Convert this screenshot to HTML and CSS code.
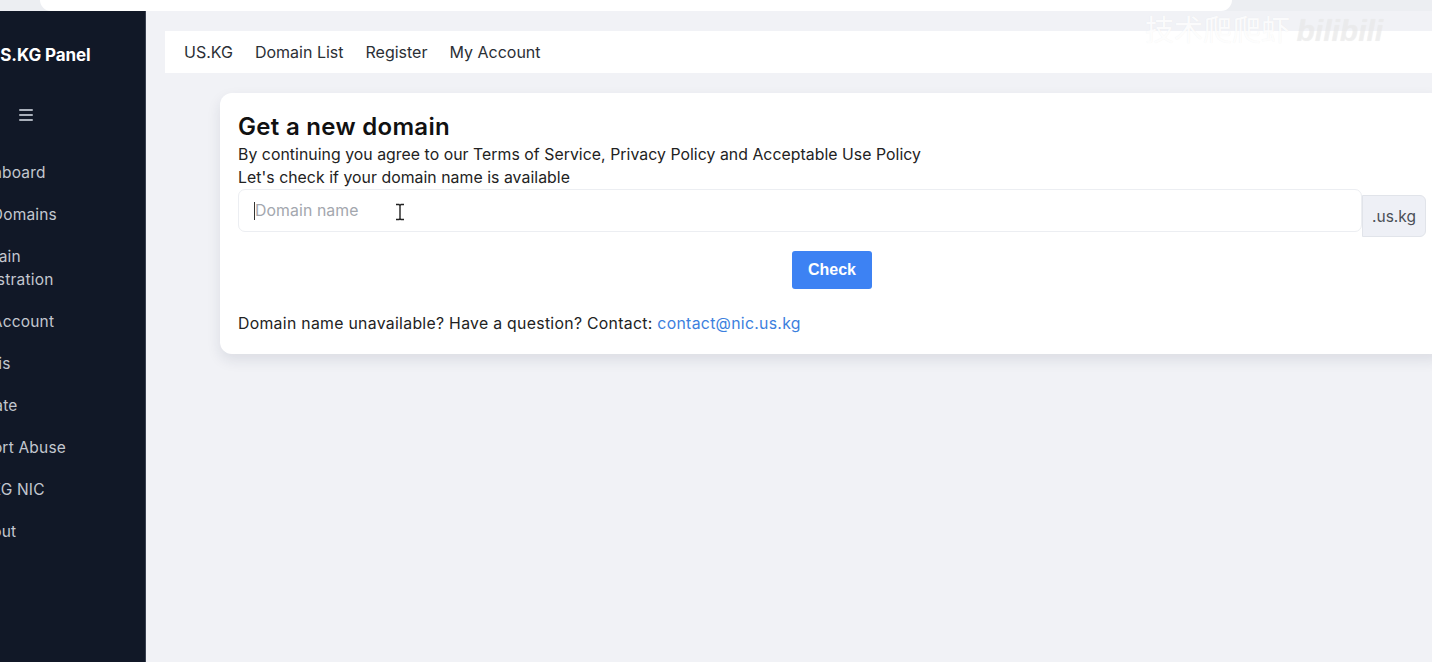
FILE: index.html
```html
<!DOCTYPE html>
<html lang="en">
<head>
<meta charset="utf-8">
<title>US.KG Panel</title>
<link rel="stylesheet" href="styles.css">
</head>
<body>
<div class="chrome"><div class="urlbar"></div></div>
<div class="app">
  <aside class="sidebar">
    <div class="brand">US.KG Panel</div>
    <div class="burger"><span></span><span></span><span></span></div>
    <nav class="menu">
      <a class="item">Dashboard</a>
      <a class="item">My Domains</a>
      <a class="item">Domain<br>Registration</a>
      <a class="item">My Account</a>
      <a class="item">Whois</a>
      <a class="item">Donate</a>
      <a class="item">Report Abuse</a>
      <a class="item">US.KG NIC</a>
      <a class="item">Logout</a>
    </nav>
  </aside>
  <main class="main">
    <div class="topnav">
      <a>US.KG</a><a>Domain List</a><a>Register</a><a>My Account</a>
    </div>
    <section class="card">
      <h1 class="title">Get a new domain</h1>
      <p class="line">By continuing you agree to our Terms of Service, Privacy Policy and Acceptable Use Policy</p>
      <p class="line">Let's check if your domain name is available</p>
      <div class="group">
        <div class="field">
          <span class="caret"></span><span class="ph">Domain name</span>
          <svg class="ibeam" width="12" height="18" viewBox="0 0 12 18"><path d="M2 1.5h3l1 1 1-1h3M6 2.5v13M2 16.5h3l1-1 1 1h3" fill="none" stroke="#222" stroke-width="1.4"/></svg>
        </div>
        <div class="suffix">.us.kg</div>
      </div>
      <div class="actions"><button class="btn">Check</button></div>
      <p class="line foot">Domain name unavailable? Have a question? Contact: <a class="link">contact@nic.us.kg</a></p>
    </section>
  </main>
</div>
<div class="watermark">技术爬爬虾 <span class="bili">bilibili</span></div>
</body>
</html>
```
FILE: styles.css
```css
* { box-sizing: border-box; }
html, body { margin: 0; padding: 0; }
body {
  width: 1432px;
  height: 662px;
  overflow: hidden;
  font-family: "Inter", "Open Sans", sans-serif;
  background: #f1f2f6;
  position: relative;
}
.chrome {
  height: 11px;
  background: #eceef2;
  padding-left: 40px;
}
.urlbar {
  width: 1192px;
  height: 11px;
  background: #ffffff;
  border-radius: 0 0 12px 12px;
}
.app {
  display: flex;
  height: 651px;
}
.sidebar {
  width: 146px;
  flex: none;
  background: #111827;
  border-right: 1px solid #3a4150;
  overflow: hidden;
  padding-top: 32px;
}
.brand {
  margin-left: -12px;
  color: #ffffff;
  font-weight: 700;
  font-size: 17px;
  line-height: 24px;
  letter-spacing: -0.1px;
  white-space: nowrap;
}
.burger {
  margin: 42px 0 0 19px;
  width: 14px;
  display: flex;
  flex-direction: column;
  gap: 3px;
}
.burger span {
  display: block;
  height: 2px;
  background: #aab0bb;
  border-radius: 1px;
}
.menu {
  margin-top: 40px;
  margin-left: -36px;
  display: flex;
  flex-direction: column;
}
.item {
  display: block;
  color: #c3c7cf;
  font-size: 15.5px;
  letter-spacing: 0.2px;
  line-height: 23px;
  margin-bottom: 19px;
  white-space: nowrap;
}
.main {
  flex: 1;
  overflow: hidden;
  padding: 20px 0 0 19px;
  background: #f1f2f6;
}
.topnav {
  height: 42px;
  background: #ffffff;
  display: flex;
  align-items: center;
  gap: 22px;
  padding-left: 19px;
  font-size: 16px;
  letter-spacing: 0;
  color: #2b2f36;
}
.card {
  margin: 20px 0 0 55px;
  width: 1224px;
  background: #ffffff;
  border-radius: 12px;
  box-shadow: 0 6px 14px rgba(30, 40, 70, 0.10);
  padding: 20px 18px 19px 18px;
}
.title {
  margin: 0 0 2px 0;
  font-size: 24px;
  line-height: 28px;
  font-weight: 600;
  color: #111111;
  letter-spacing: 0.3px;
}
.line {
  margin: 0;
  font-size: 15.8px;
  letter-spacing: 0.05px;
  line-height: 23px;
  color: #222222;
}
.foot {
  letter-spacing: 0.3px;
}
.group {
  display: flex;
  align-items: flex-start;
  margin-top: 0;
}
.field {
  flex: 1;
  height: 43px;
  border: 1px solid #eceef2;
  border-radius: 7px;
  display: flex;
  align-items: center;
  padding-left: 15px;
  position: relative;
}
.caret {
  width: 1px;
  height: 18px;
  background: #333;
}
.ph {
  color: #a3a7ae;
  font-size: 15.8px;
  letter-spacing: 0.1px;
}
.ibeam {
  position: absolute;
  left: 155px;
  top: 13px;
}
.suffix {
  width: 64px;
  height: 42px;
  margin-top: 6px;
  background: #eef0f6;
  border: 1px solid #e1e4ea;
  border-radius: 0 6px 6px 0;
  display: flex;
  align-items: center;
  justify-content: center;
  color: #4a4f57;
  font-size: 15.5px;
}
.actions {
  display: flex;
  justify-content: center;
  margin-top: 14px;
  margin-bottom: 23px;
}
.btn {
  width: 80px;
  height: 38px;
  border: none;
  border-radius: 3px;
  background: #3d82f3;
  color: #ffffff;
  font-family: "Liberation Sans", Arial, sans-serif;
  font-weight: 700;
  font-size: 16px;
}
.link {
  color: #3c7fde;
}
.watermark {
  position: absolute;
  left: 1145px;
  top: 10px;
  font-family: "Noto Sans CJK SC", sans-serif;
  font-size: 29px;
  line-height: 36px;
  color: rgba(255, 255, 255, 0.9);
  text-shadow: 0 0 1px rgba(0, 0, 0, 0.06);
  white-space: nowrap;
}
.bili {
  font-family: "Liberation Sans", sans-serif;
  font-weight: 700;
  font-style: italic;
  font-size: 30px;
  color: rgba(238, 238, 238, 0.7);
}
```
